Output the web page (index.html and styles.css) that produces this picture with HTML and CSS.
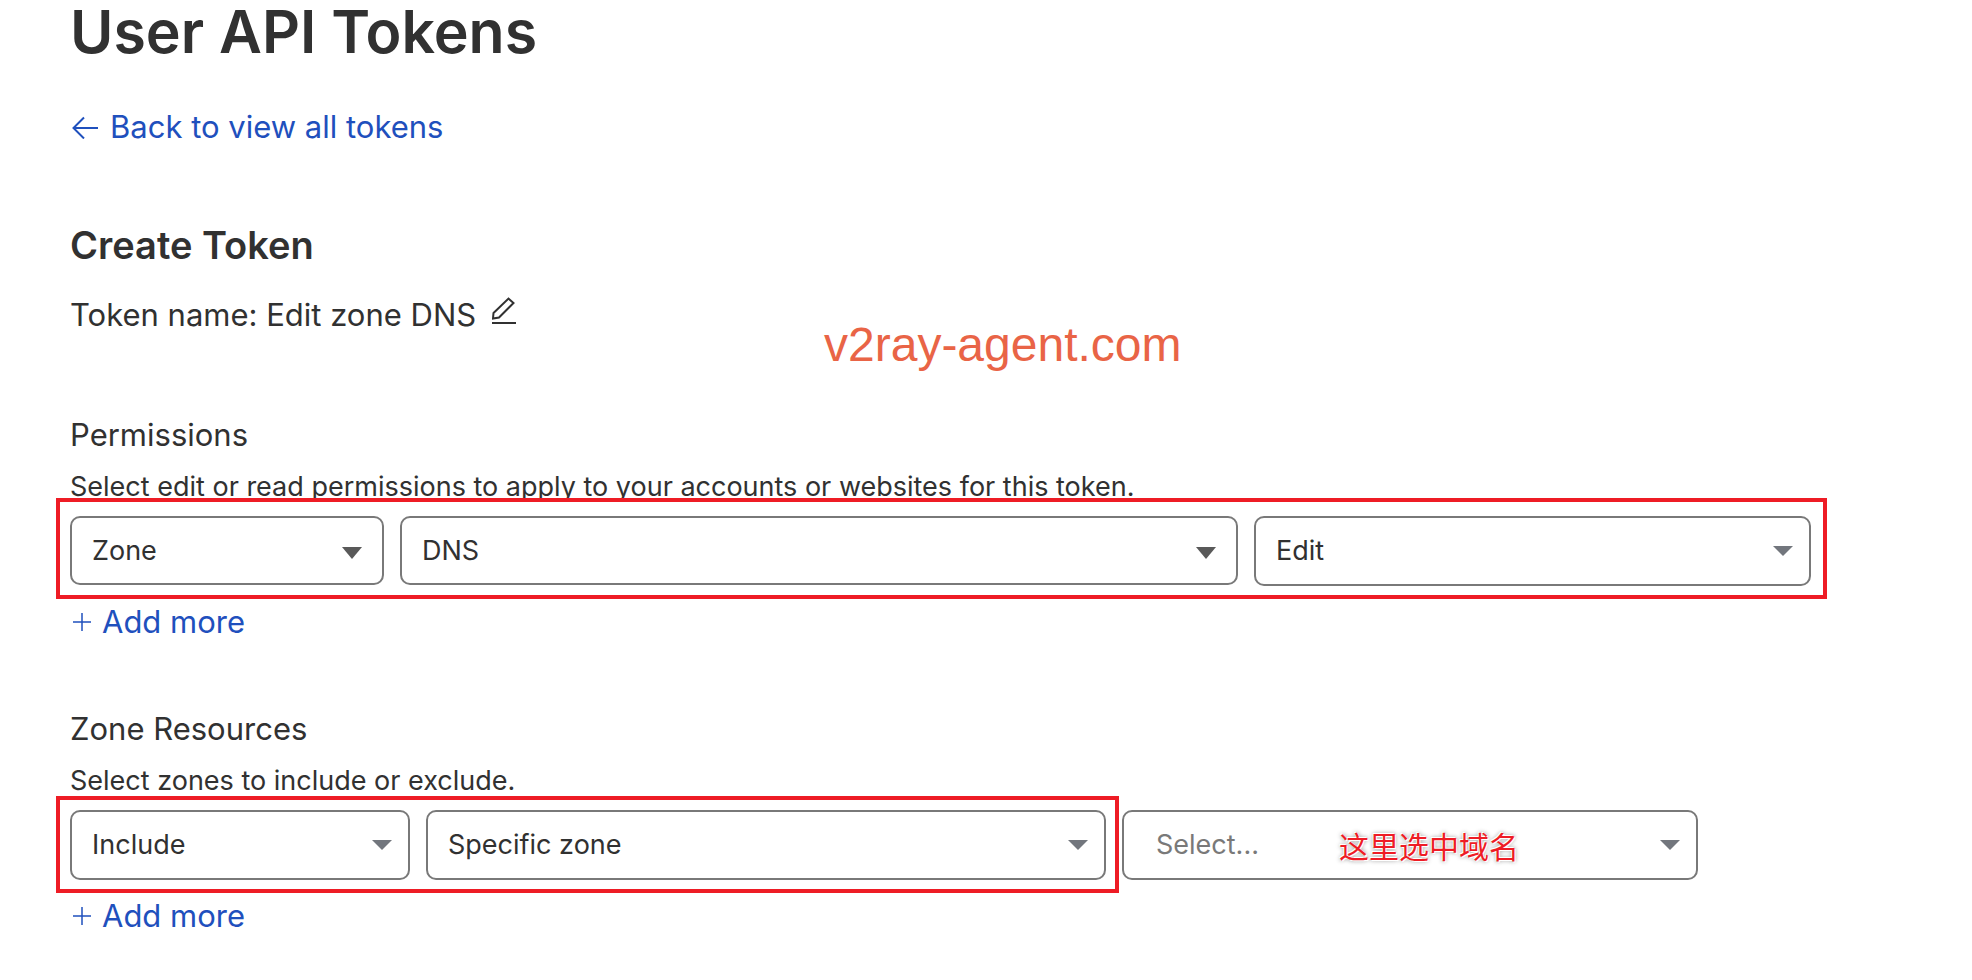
FILE: index.html
```html
<!DOCTYPE html>
<html lang="en">
<head>
  <meta charset="UTF-8">
  <meta name="viewport" content="width=device-width, initial-scale=1.0">
  <title>User API Tokens</title>
  <link rel="stylesheet" href="styles.css">
</head>
<body>
  <main class="page">
    <h1>User API Tokens</h1>

    <a class="link back-link" href="#">
      <svg class="icon-arrow" viewBox="0 0 26 24" aria-hidden="true"><path d="M26 13H2M12 2.500L1.500 13 12 23.500"/></svg>
      Back to view all tokens
    </a>

    <h2>Create Token</h2>
    <div class="token-name">
      <span>Token name: Edit zone DNS</span>
      <button class="edit-button" type="button" aria-label="Edit token name">
        <svg class="icon-edit" viewBox="0 0 24 27" aria-hidden="true"><path d="M0 26h24M1 21.500l.5-5.500L16.500 1.500l5 4.500L7 20.500z"/></svg>
      </button>
    </div>

    <p class="watermark">v2ray-agent.com</p>

    <!-- Permissions -->
    <section class="section">
      <h3>Permissions</h3>
      <p class="description">Select edit or read permissions to apply to your accounts or websites for this token.</p>
      <div class="permission-row">
        <div class="select-box dark">
          <select aria-label="Permission type"><option>Zone</option></select>
          <svg class="caret" viewBox="0 0 20 12" aria-hidden="true"><path d="M0 0h20L10 12z"/></svg>
        </div>
        <div class="select-box dark">
          <select aria-label="Permission item"><option>DNS</option></select>
          <svg class="caret" viewBox="0 0 20 12" aria-hidden="true"><path d="M0 0h20L10 12z"/></svg>
        </div>
        <div class="select-box">
          <select aria-label="Access level"><option>Edit</option></select>
          <svg class="caret" viewBox="0 0 20 10" aria-hidden="true"><path d="M0 0h20L10 10z"/></svg>
        </div>
        <div class="frame frame-permissions"></div>
      </div>
      <button class="link add-button" type="button">
        <svg class="icon-plus" viewBox="0 0 18 18" aria-hidden="true"><path d="M9 0v18M0 9h18"/></svg>
        Add more
      </button>
    </section>

    <!-- Zone Resources -->
    <section class="section">
      <h3>Zone Resources</h3>
      <p class="description">Select zones to include or exclude.</p>
      <div class="zone-row">
        <div class="zone-group">
          <div class="select-box">
            <select aria-label="Include or exclude"><option>Include</option></select>
            <svg class="caret" viewBox="0 0 20 10" aria-hidden="true"><path d="M0 0h20L10 10z"/></svg>
          </div>
          <div class="select-box">
            <select aria-label="Zone scope"><option>Specific zone</option></select>
            <svg class="caret" viewBox="0 0 20 10" aria-hidden="true"><path d="M0 0h20L10 10z"/></svg>
          </div>
          <div class="frame frame-zone"></div>
        </div>
        <div class="select-box empty">
          <select aria-label="Zone"><option>Select...</option></select>
          <span class="note" lang="zh-CN">这里选中域名</span>
          <svg class="caret" viewBox="0 0 20 10" aria-hidden="true"><path d="M0 0h20L10 10z"/></svg>
        </div>
      </div>
      <button class="link add-button" type="button">
        <svg class="icon-plus" viewBox="0 0 18 18" aria-hidden="true"><path d="M9 0v18M0 9h18"/></svg>
        Add more
      </button>
    </section>
  </main>
</body>
</html>
```
FILE: styles.css
```css
* {
  box-sizing: border-box;
}
body {
  margin: 0;
  background-color: #fff;
  color: #313131;
  font-family: Inter, "Noto Sans CJK SC", sans-serif;
  font-size: 31px;
  line-height: 40px;
}
.page {
  position: relative;
  padding: 0 161px 44px 70px;
}
h1, h2, h3, p {
  margin: 0;
}
h1 {
  font-size: 59px;
  font-weight: 600;
  line-height: 64px;
}
h2 {
  margin-top: 74px;
  font-size: 38px;
  font-weight: 600;
  line-height: 48px;
}
h3 {
  font-size: 31px;
  font-weight: 400;
}
svg {
  fill: none;
  stroke: currentColor;
  stroke-width: 2;
}
button {
  padding: 0;
  border: 0;
  background: none;
  color: inherit;
  font: inherit;
  cursor: pointer;
}
.link {
  display: flex;
  align-items: center;
  width: fit-content;
  color: #1f50bd;
  text-decoration: none;
}
.back-link {
  margin-top: 43px;
  gap: 12px;
}
.icon-arrow {
  width: 26px;
  height: 24px;
  margin-left: 2px;
}
.token-name {
  display: flex;
  align-items: center;
  gap: 16px;
  margin-top: 26px;
}
.edit-button {
  display: flex;
  padding-bottom: 10px;
}
.icon-edit {
  width: 24px;
  height: 27px;
}

/* Sections */
.section {
  margin-top: 80px;
}
.section + .section {
  margin-top: 67px;
}
.description {
  margin: 14px 0 11px;
  font-size: 27px;
  line-height: 36px;
}
.permission-row {
  position: relative;
  display: grid;
  grid-template-columns: 314fr 838fr 557fr;
  gap: 16px;
}
.zone-row {
  display: grid;
  grid-template-columns: 1036fr 576fr 97fr;
  gap: 16px;
}
.zone-group {
  position: relative;
  display: grid;
  grid-template-columns: 1fr 2fr;
  gap: 16px;
}
.add-button {
  gap: 11px;
  margin-top: 16px;
}
.icon-plus {
  width: 18px;
  height: 18px;
  margin-left: 3px;
  stroke-width: 1.5;
}

/* Drop-downs */
.select-box {
  position: relative;
  height: 70px;
}
select {
  width: 100%;
  height: 100%;
  padding: 0 48px 0 20px;
  border: 2px solid #797979;
  border-radius: 10px;
  background: #fff;
  color: inherit;
  font: inherit;
  font-size: 27px;
  appearance: none;
}
.caret {
  position: absolute;
  top: 30px;
  right: 18px;
  width: 20px;
  fill: #72767d;
  stroke: none;
  pointer-events: none;
}
.dark {
  height: 69px;
}
.dark .caret {
  top: 31px;
  right: 22px;
  fill: #595959;
}
.empty select {
  padding-left: 32px;
  color: #797979;
}

/* Marks drawn over the form */
.frame {
  position: absolute;
  border: 4px solid #ee1c25;
  box-shadow: inset 0 3px #fff;
  pointer-events: none;
}
.frame-permissions {
  inset: -18px -16px -13px -14px;
}
.frame-zone {
  inset: -14px -13px -13px -14px;
}
.note {
  position: absolute;
  top: 15px;
  left: 217px;
  color: #ee1c25;
  font-family: "Noto Sans CJK SC", sans-serif;
  font-size: 30px;
  text-shadow: 1px 1px 0 #fff, -1px -1px 0 #fff, 0 0 4px #aaa, 0 0 5px #aaa;
  pointer-events: none;
}
.watermark {
  position: absolute;
  top: 321px;
  left: 824px;
  color: #e96446;
  font-family: "Liberation Sans", Arial, sans-serif;
  font-size: 48px;
  line-height: 48px;
}
```
